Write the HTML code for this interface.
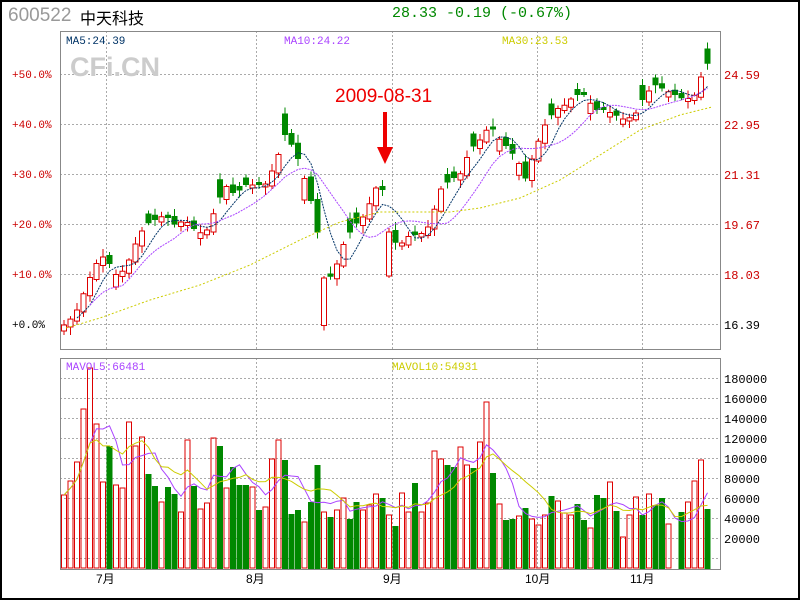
<!DOCTYPE html>
<html><head><meta charset="utf-8"><style>
*{margin:0;padding:0}
body{width:800px;height:600px;background:#fff;overflow:hidden;position:relative}
#b{position:absolute;left:0;top:0;width:796px;height:596px;border:2px solid #000}
.t{position:absolute;white-space:nowrap;font-family:"Liberation Mono","Noto Sans CJK SC",monospace}
</style></head><body>
<div id="b"></div>
<div class="t" style="left:8px;top:5px;font-family:'Liberation Sans',sans-serif;font-size:19px;color:#999">600522</div>
<div class="t" style="left:80px;top:5px;font-family:'Liberation Sans','Noto Sans CJK SC',sans-serif;font-size:16px;color:#000">中天科技</div>
<div class="t" style="left:392px;top:5px;font-size:15px;color:#080">28.33 -0.19 (-0.67%)</div>
<svg id="s" width="800" height="600" style="position:absolute;left:0;top:0" xmlns="http://www.w3.org/2000/svg"></svg>
<script>
(function(){
var s=document.getElementById('s'),h='';
function L(x1,y1,x2,y2,c,d,w){h+='<line x1="'+x1+'" y1="'+y1+'" x2="'+x2+'" y2="'+y2+'" stroke="'+c+'" stroke-width="'+(w||1)+'"'+(d?' stroke-dasharray="'+d+'"':'')+'/>';}
function T(x,y,t,c,fs,a,ff){h+='<text x="'+x+'" y="'+y+'" fill="'+c+'" font-size="'+fs+'" font-family="'+(ff||"Liberation Mono,Noto Sans CJK SC,monospace")+'"'+(a?' text-anchor="'+a+'"':'')+'>'+t+'</text>';}
var VX=[106,256,392,537,642];
[74,124,174,224,274,324].forEach(function(y){L(60,y+.5,720,y+.5,'#aaa','2,2');});
VX.forEach(function(x){L(x+.5,31,x+.5,349,'#aaa','2,2');L(x+.5,358,x+.5,569,'#aaa','2,2');});
for(var y=378;y<=558;y+=20)L(60,y+.5,720,y+.5,'#aaa','2,2');
h+='<text x="70" y="76" fill="#ccc" font-size="27" font-weight="bold" font-family="Liberation Sans,sans-serif">CFi.CN</text>';
var P=[[60,327],[64,325],[75,315],[85,290],[95,265],[105,255],[115,275],[125,270],[135,245],[145,225],[155,220],[165,215],[175,225],[185,220],[195,230],[205,235],[215,210],[225,185],[235,195],[245,185],[255,185],[265,185],[275,165],[285,135],[295,150],[305,180],[315,215],[325,285],[335,270],[345,240],[355,225],[365,215],[375,190],[380,180],[385,200],[390,240],[400,245],[410,235],[420,235],[430,225],[440,190],[450,180],[460,175],[470,150],[480,140],[490,125],[500,140],[510,150],[520,165],[525,180],[535,150],[545,125],[555,110],[565,105],[575,95],[585,95],[595,110],[605,110],[615,115],[625,120],[635,115],[645,95],[655,85],[665,90],[675,95],[685,100],[695,95],[705,65],[715,60],[720,60]];
function ip(x){for(var i=1;i<P.length;i++)if(x<=P[i][0]){var a=P[i-1],b=P[i];return a[1]+(b[1]-a[1])*(x-a[0])/(b[0]-a[0]);}return 60;}
var V=[[495,0],[481,0],[462,0],[409,0],[368,0],[424,0],[482,0],[446,1],[485,0],[488,0],[422,0],[446,0],[437,0],[474,1],[486,1],[502,0],[487,1],[494,1],[512,0],[440,0],[486,1],[509,0],[503,0],[438,0],[446,1],[488,0],[467,1],[485,1],[485,1],[487,0],[510,1],[507,0],[459,0],[440,0],[460,1],[514,1],[510,1],[522,0],[502,1],[465,1],[512,0],[517,1],[510,0],[498,0],[519,1],[502,1],[510,0],[505,0],[494,0],[498,1],[515,0],[526,1],
[493,0],[512,0],[483,1],[512,0],[503,0],[451,0],[459,0],[465,1],[467,1],[447,0],[465,0],[468,1],[442,0],[402,0],[473,1],[504,0],[520,1],[519,1],[516,0],[508,1],[519,0],[525,0],[515,0],[496,1],[501,0],[513,0],[515,0],[504,1],[520,1],[528,0],[495,1],[498,1],[482,0],[511,1],[537,0],[515,0],[497,0],[515,1],[494,0],[505,1],[498,1],[524,0],[569,1],[512,1],[502,0],[481,0],[460,0],[509,1]];
var n=V.length,cl=[],X=[];
for(var i=0;i<n;i++){X[i]=64+6.5*i;cl[i]=ip(X[i]);}
var R='#d00',G='#080';
var rs=[5,3,7,2,6,4,8,3,5,6,2,7,4,3,6];
for(var i=0;i<n;i++){
 var x=X[i],c=cl[i],g=V[i][1],pv=i?cl[i-1]:c+4,b=Math.max(3,Math.abs(c-pv)+2);
 var tp=g?c-b:c,bt=g?c:c+b;
 var hi=tp-rs[i%15],lo=bt+rs[(i+5)%15];
 L(x,hi,x,lo,g?G:R,0,1);
 if(g)h+='<rect x="'+(x-3)+'" y="'+tp+'" width="6" height="'+b+'" fill="'+G+'"/>';
 else h+='<rect x="'+(x-2.5)+'" y="'+tp+'" width="5" height="'+b+'" fill="#fff" stroke="'+R+'"/>';
 var vt=V[i][0];
 if(vt<569){if(g)h+='<rect x="'+(x-3)+'" y="'+vt+'" width="6" height="'+(569-vt)+'" fill="'+G+'"/>';
 else h+='<rect x="'+(x-2.5)+'" y="'+vt+'" width="5" height="'+(568-vt)+'" fill="none" stroke="'+R+'"/>';}
}
function ma(arr,k,st){var o='';for(var i=st;i<n;i++){var s2=0,m=0;for(var j=Math.max(0,i-k+1);j<=i;j++){s2+=arr[j];m++;}o+=(o?' ':'')+X[i]+','+(s2/m).toFixed(1);}return o;}
function pl(pts,c,d,w){h+='<polyline points="'+pts+'" fill="none" stroke="'+c+'" stroke-width="'+(w||1)+'"'+(d?' stroke-dasharray="'+d+'"':'')+'/>';}
pl(ma(cl,5,2),'#036','2,1');
pl(ma(cl,10,4),'#a4f','2,1');
pl('66,328 100,318 150,300 200,285 250,265 300,240 340,222 380,212 420,212 450,212 480,208 520,198 560,180 600,155 640,130 680,115 712,107','#cc0','2,2');
var vv=V.map(function(v){return v[0];});
pl(ma(vv,5,0),'#a4f',0,1);
pl(ma(vv,10,0),'#cc0',0,1);
h+='<rect x="60.5" y="31.5" width="660" height="318" fill="none" stroke="#888"/>';
h+='<rect x="60.5" y="358.5" width="660" height="211" fill="none" stroke="#888"/>';
T(66,44,'MA5:24.39','#036',11);T(284,44,'MA10:24.22','#a4f',11);T(502,44,'MA30:23.53','#cc0',11);
T(66,370,'MAVOL5:66481','#a4f',11);T(392,370,'MAVOL10:54931','#cc0',11);
['+50.0%','+40.0%','+30.0%','+20.0%','+10.0%','+0.0%'].forEach(function(t,k){T(12,78+50*k,t,k==5?'#000':'#c00',11);});
['24.59','22.95','21.31','19.67','18.03','16.39'].forEach(function(t,k){T(724,79+50*k,t,k==5?'#000':'#c00',12);});
for(var k=0;k<9;k++)T(724,383+20*k,String(180000-20000*k),'#000',12);
[['7月',96],['8月',246],['9月',383],['10月',525],['11月',630]].forEach(function(a){T(a[1],583,a[0],'#000',12,0,'Liberation Sans,Noto Sans CJK SC,sans-serif');});
T(335,102,'2009-08-31','#e00',19,0,'Liberation Sans,sans-serif');
h+='<rect x="383" y="112" width="4" height="38" fill="#e00"/><polygon points="377,147 393,147 385,164" fill="#e00"/>';
s.innerHTML=h;
})();
</script>
</body></html>
